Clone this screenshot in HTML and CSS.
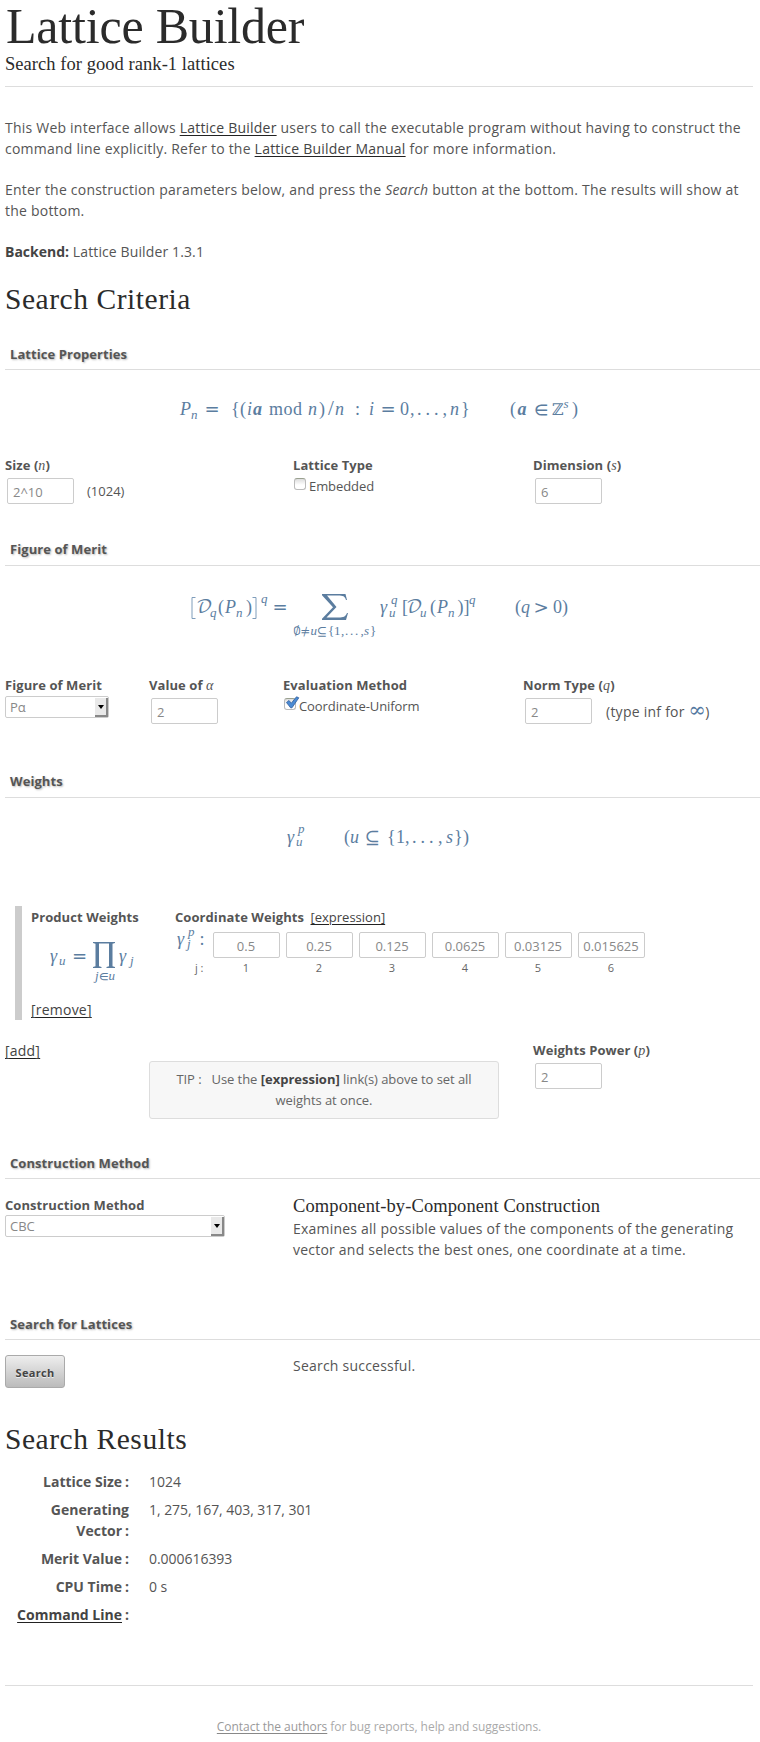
FILE: index.html
```html
<!DOCTYPE html>
<html lang="en">
<head>
<meta charset="utf-8">
<title>Lattice Builder</title>
<link rel="stylesheet" href="styles.css">
</head>
<body>
<header class="masthead">
  <h1 class="title">Lattice Builder</h1>
  <p class="subtitle">Search for good rank-1 lattices</p>
</header>
<div class="intro">
  <p>This Web interface allows <a href="#">Lattice Builder</a> users to call the executable program without having to construct the<br>command line explicitly. Refer to the <a href="#">Lattice Builder Manual</a> for more information.</p>
  <p>Enter the construction parameters below, and press the <em>Search</em> button at the bottom. The results will show at<br>the bottom.</p>
  <p class="backend"><strong>Backend:</strong> Lattice Builder 1.3.1</p>
</div>
<h2 class="heading">Search Criteria</h2>

<section class="panel lattice">
  <h3 class="panel-title">Lattice Properties</h3>
  <svg class="math" width="755" height="85" viewBox="5 370 755 85">
    <text y="415"><tspan class="i" x="180">P</tspan><tspan class="i s" x="191" dy="4">n</tspan><tspan x="205" dy="-4" class="sym">=</tspan><tspan x="231">{</tspan><tspan x="240">(</tspan><tspan class="i" x="247">i</tspan><tspan class="i b" x="253">a</tspan><tspan x="269" textLength="33">mod</tspan><tspan class="i" x="308">n</tspan><tspan x="319">)</tspan><tspan class="big" x="328">/</tspan><tspan class="i" x="335">n</tspan><tspan x="355">:</tspan><tspan class="i" x="369">i</tspan><tspan x="381" class="sym">=</tspan><tspan x="400">0</tspan><tspan x="410">,</tspan><tspan x="417 425.5 434">...</tspan><tspan x="442.5">,</tspan><tspan class="i" x="450">n</tspan><tspan x="461">}</tspan><tspan x="510">(</tspan><tspan class="i b" x="517.5">a</tspan><tspan x="534" class="sym">∈</tspan><tspan x="551" class="zz">ℤ</tspan><tspan class="i s" x="563.5" dy="-7">s</tspan><tspan x="572" dy="7">)</tspan></text>
  </svg>
  <div class="fields cols3">
    <div><label class="lbl">Size (<i class="v">n</i>)</label><div class="line"><input class="box" value="2^10"><span class="note">(1024)</span></div></div>
    <div><label class="lbl">Lattice Type</label><div class="check"><span class="tick"></span>Embedded</div></div>
    <div><label class="lbl">Dimension (<i class="v">s</i>)</label><div class="line"><input class="box" value="6"></div></div>
  </div>
</section>

<section class="panel merit">
  <h3 class="panel-title raised">Figure of Merit</h3>
  <svg class="math" width="755" height="109" viewBox="5 566 755 109">
    <path class="rule" d="M195.500 597.500h-3.500v21h3.500M252.500 597.500h3.500v21h-3.500"/>
    <text y="613"><tspan class="cal" x="196">𝒟</tspan><tspan class="i s" x="210" dy="4">q</tspan><tspan x="218" dy="-4">(</tspan><tspan class="i" x="225">P</tspan><tspan class="i s" x="236" dy="4">n</tspan><tspan x="246" dy="-4">)</tspan><tspan class="i s" x="261" dy="-10">q</tspan><tspan class="sym" x="273" dy="10">=</tspan></text>
    <path class="solid" d="M322 594h23.500l1.500 6h-1c-1-4-3-4.600-8-4.600h-11l9.500 11.600-10 10.500h12c5 0 7-.7 8.500-4.500h1l-2 7H322v-1.200l11-11.600-11-12z"/>
    <text y="635" class="under"><tspan x="293" class="ms">∅</tspan><tspan x="300.500" class="ms">≠</tspan><tspan class="i" x="310.500">u</tspan><tspan x="317" class="ms">⊆</tspan><tspan x="328">{</tspan><tspan x="334">1</tspan><tspan x="341">,</tspan><tspan x="345 350 355">...</tspan><tspan x="360.500">,</tspan><tspan x="364" class="i">s</tspan><tspan x="370">}</tspan></text>
    <text y="613"><tspan class="i" x="380">γ</tspan><tspan class="i s" x="389" dy="4">u</tspan><tspan class="i s" x="391" dy="-13">q</tspan><tspan x="402" dy="9">[</tspan><tspan class="cal" x="406">𝒟</tspan><tspan class="i s" x="420" dy="4">u</tspan><tspan x="430" dy="-4">(</tspan><tspan class="i" x="437">P</tspan><tspan class="i s" x="448" dy="4">n</tspan><tspan x="457.500" dy="-4">)</tspan><tspan x="463.500">]</tspan><tspan class="i s" x="469" dy="-9">q</tspan><tspan x="515" dy="9">(</tspan><tspan class="i" x="521">q</tspan><tspan class="sym" x="534">&gt;</tspan><tspan x="553">0</tspan><tspan x="562">)</tspan></text>
  </svg>
  <div class="fields cols4">
    <div><label class="lbl">Figure of Merit</label><div class="select small"><span>Pα</span><b class="arrow"></b></div></div>
    <div><label class="lbl">Value of <i class="v">α</i></label><div class="line"><input class="box" value="2"></div></div>
    <div><label class="lbl">Evaluation Method</label><div class="check"><span class="tick"><svg class="mark" width="15" height="13" viewBox="0 0 15 13"><path d="M1.500 6.500l2.500-2 2.300 2.700L11.500.8l2.300 1L7 11.800H5.600z"/></svg></span>Coordinate-Uniform</div></div>
    <div><label class="lbl">Norm Type (<i class="v">q</i>)</label><div class="line"><input class="box" value="2"><span class="note large">(type inf for <span class="inf">∞</span>)</span></div></div>
  </div>
</section>

<section class="panel weights">
  <h3 class="panel-title raised">Weights</h3>
  <svg class="math" width="755" height="108" viewBox="5 798 755 108">
    <text y="843"><tspan class="i" x="287">γ</tspan><tspan class="i s" x="296" dy="3">u</tspan><tspan class="i s" x="298" dy="-13">p</tspan><tspan x="344" dy="10">(</tspan><tspan class="i" x="350">u</tspan><tspan class="sym" x="365">⊆</tspan><tspan x="387">{</tspan><tspan x="396">1</tspan><tspan x="405">,</tspan><tspan x="412 420.500 429">...</tspan><tspan x="438">,</tspan><tspan class="i" x="446">s</tspan><tspan x="454">}</tspan><tspan x="463">)</tspan></text>
  </svg>
  <div class="product">
    <div class="product-left">
      <label class="lbl">Product Weights</label>
      <svg class="math" width="110" height="72" viewBox="31 927 110 72">
        <text y="962"><tspan class="i" x="50">γ</tspan><tspan class="i s" x="59" dy="3">u</tspan><tspan class="sym" x="72.500" dy="-3">=</tspan><tspan class="i" x="119">γ</tspan><tspan class="i s" x="130" dy="3">j</tspan></text>
        <path class="solid" d="M93 942h22v1l-2.500.8v22.400l2.500.8v1h-8.500v-1l2.500-.8V943.500h-10v22.700l2.500.8v1H93v-1l2.500-.8v-22.400l-2.500-.8z"/>
        <text y="980" class="under"><tspan class="i" x="95">j</tspan><tspan class="ms" x="99">∈</tspan><tspan class="i" x="108.500">u</tspan></text>
      </svg>
      <a href="#">[remove]</a>
    </div>
    <div class="product-right">
      <div class="lbl">Coordinate Weights <a class="expr" href="#">[expression]</a></div>
      <div class="weights-row">
        <svg class="math" width="31" height="33" viewBox="175 927 31 33"><text y="945"><tspan class="i" x="177">γ</tspan><tspan class="i s" x="187" dy="3">j</tspan><tspan class="i s" x="188" dy="-12">p</tspan><tspan x="199.500" dy="9">:</tspan></text></svg>
        <input class="box" value="0.5"><input class="box" value="0.25"><input class="box" value="0.125"><input class="box" value="0.0625"><input class="box" value="0.03125"><input class="box" value="0.015625">
        <span class="jl">j :</span><span>1</span><span>2</span><span>3</span><span>4</span><span>5</span><span>6</span>
      </div>
    </div>
  </div>
  <div class="after">
    <a href="#">[add]</a>
    <div class="tip">TIP : &nbsp; Use the <strong>[expression]</strong> link(s) above to set all<br>weights at once.</div>
    <div class="power"><label class="lbl">Weights Power (<i class="v">p</i>)</label><div class="line"><input class="box" value="2"></div></div>
  </div>
</section>

<section class="panel method">
  <h3 class="panel-title">Construction Method</h3>
  <div class="fields cols3">
    <div><label class="lbl">Construction Method</label><div class="select wide"><span>CBC</span><b class="arrow"></b></div></div>
    <div class="about"><h4>Component-by-Component Construction</h4><p>Examines all possible values of the components of the generating<br>vector and selects the best ones, one coordinate at a time.</p></div>
  </div>
</section>

<section class="panel run">
  <h3 class="panel-title">Search for Lattices</h3>
  <div class="fields cols3"><div><button class="go">Search</button></div><p class="status">Search successful.</p></div>
</section>

<h2 class="heading results-heading">Search Results</h2>
<dl class="results">
  <dt>Lattice Size<s>:</s></dt><dd>1024</dd>
  <dt>Generating<br>Vector<s>:</s></dt><dd>1, 275, 167, 403, 317, 301</dd>
  <dt>Merit Value<s>:</s></dt><dd>0.000616393</dd>
  <dt>CPU Time<s>:</s></dt><dd>0 s</dd>
  <dt><a href="#">Command Line</a><s>:</s></dt><dd></dd>
</dl>
<footer class="foot"><a href="#">Contact the authors</a> for bug reports, help and suggestions.</footer>
</body>
</html>
```
FILE: styles.css
```css
* { box-sizing: border-box; }
body { margin: 0; padding-left: 5px; width: 760px; height: 1742px; overflow: hidden; background: #fff; color: #555; font: 14px/21px "Open Sans", sans-serif; letter-spacing: .22px; }
h1, h2, h3, h4, p, dl, dd { margin: 0; }
a { color: #444; text-decoration: underline; text-decoration-color: #222; text-underline-offset: 2px; }
strong { color: #444; letter-spacing: 0; }
.masthead { width: 748px; height: 87px; border-bottom: 1px solid #ddd; }
.title { font: 400 50px/52px "Liberation Serif", serif; letter-spacing: -.2px; color: #2b2b2b; padding-left: 1px; }
.subtitle { font: 18.500px/24px "Liberation Serif", serif; letter-spacing: .05px; color: #2b2b2b; }
.intro { display: flex; flex-direction: column; gap: 20px; padding-top: 30px; white-space: nowrap; }
.backend { letter-spacing: .12px; }
.heading { font: 400 29.500px/40px "Liberation Serif", serif; color: #2b2b2b; letter-spacing: .55px; margin-top: 17px; height: 66px; }
.panel-title { height: 25px; border-bottom: 1px solid #ddd; padding-left: 5px; font: 700 13px/18px "Open Sans", sans-serif; text-shadow: 1px 1px 2px #bbb; letter-spacing: .07px; }
.raised { line-height: 16px; }
.lattice { height: 196px; }
.merit { height: 232px; }
.weights { height: 381px; }
.method { height: 161px; }
.run { height: 95px; }
.math { display: block; overflow: visible; fill: #5b7d9f; font: 18px "Liberation Serif", serif; letter-spacing: 0; }
.math .i { font-style: italic; }
.math .b { font-weight: 700; }
.math .s { font-size: 13px; }
.math .big { font-size: 21px; }
.math .sym { font-family: "DejaVu Math TeX Gyre", "DejaVu Serif", serif; }
.math .zz { font: 16px "DejaVu Math TeX Gyre", "DejaVu Serif", serif; }
.math .ms { font: 12px "DejaVu Math TeX Gyre", "DejaVu Serif", serif; }
.math .cal { font: 18px "DejaVu Math TeX Gyre", "DejaVu Serif", serif; }
.math .under { font-size: 13px; }
.rule { fill: none; stroke: #7f9dbb; }
.fields { display: grid; }
.cols3 { grid-template-columns: 288px 240px 1fr; }
.cols4 { grid-template-columns: 144px 134px 240px 1fr; }
.lbl { display: block; font: 700 13px/20px "Open Sans", sans-serif; letter-spacing: .07px; white-space: nowrap; }
.v { font: italic 14px/1 "Liberation Serif", serif; }
.line { display: flex; align-items: center; padding: 3px 0 0 2px; }
.box { display: block; width: 67px; height: 26px; border: 1px solid #ccc; border-radius: 2px; padding: 1px 5px 0; color: #888; background: #fff; font: 13px "Open Sans", sans-serif; outline: 0; }
.note { margin-left: 13px; font-size: 13px; letter-spacing: 0; white-space: nowrap; }
.large { font-size: 14px; letter-spacing: .25px; margin-left: 14px; }
.inf { color: #53789f; font: 21px/14px "DejaVu Math TeX Gyre", "DejaVu Serif", serif; }
.check { display: flex; font-size: 13px; letter-spacing: -.08px; padding: 1px 0 0 1px; gap: 3px; white-space: nowrap; }
.tick { position: relative; width: 12px; height: 12px; margin-top: 2px; border: 1px solid #bbb; border-top-color: #99a08f; border-radius: 3px; background: linear-gradient(#ddd, #fff 60%); }
.mark { position: absolute; left: 0; top: -3px; fill: #4b8bd4; stroke: #2d5c9c; stroke-width: .8; }
.select { display: flex; justify-content: space-between; height: 22px; border: 1px solid #ccc; border-radius: 2px; font: 13px/21px "Open Sans", sans-serif; letter-spacing: 0; color: #888; padding-left: 4px; margin-top: 1px; }
.small { width: 104px; }
.wide { width: 220px; margin-top: 0; }
.arrow { display: grid; place-items: center; width: 13px; margin-top: 1px; background: #e9e9e9; border-right: 2px solid #888; border-bottom: 2px solid #888; }
.arrow::before { content: ""; border: 3px solid transparent; border-top: 4px solid #000; border-bottom: 0; }
.product { display: flex; height: 114px; margin-left: 10px; border-left: 7px solid #ccc; padding: 1px 0 0 9px; }
.product-left { width: 144px; }
.expr { font-weight: 400; margin-left: 3px; letter-spacing: 0; }
.weights-row { display: grid; grid-template-columns: 31.500px repeat(6, 67px); column-gap: 6px; font-size: 11px; line-height: 16px; text-align: center; color: #666; letter-spacing: 0; }
.weights-row .box { margin-top: 5px; text-align: center; padding: 1px 0 0; letter-spacing: 0; }
.jl { text-align: right; padding-right: 3px; }
.after { display: grid; grid-template-columns: 144px 350px 1fr; align-items: start; padding-top: 20px; }
.tip { height: 58px; margin-top: 21px; border: 1px solid #ddd; border-radius: 3px; background: #f7f7f7; color: #666; font-size: 13px; line-height: 21px; padding-top: 7px; text-align: center; letter-spacing: -.06px; }
.power { padding-left: 34px; }
.method .fields { padding-top: 16px; }
.about { grid-column: 2 / 4; white-space: nowrap; }
.about h4 { font: 400 18.500px/23px "Liberation Serif", serif; letter-spacing: .1px; color: #2b2b2b; }
.go { display: block; width: 60px; height: 33px; border: 1px solid #aaa; border-radius: 3px; background: linear-gradient(#eee, #bbb); color: #444; font: 700 11px "Open Sans", sans-serif; letter-spacing: .3px; text-shadow: 0 1px #eee; padding: 1px 0 0; }
.run .fields { padding-top: 15px; }
.results-heading { margin-top: 9px; height: 52px; }
.results { display: grid; grid-template-columns: 124px 1fr; column-gap: 20px; row-gap: 7px; }
.results dt { font-weight: 700; text-align: right; letter-spacing: 0; }
.results dd { letter-spacing: -.04px; }
.results s { text-decoration: none; margin-left: 3px; }
.foot { width: 748px; margin-top: 60px; border-top: 1px solid #ddd; padding-top: 30px; text-align: center; font-size: 12px; color: #aaa; letter-spacing: -.04px; }
.foot a { color: #999; text-decoration-color: #888; }
```
